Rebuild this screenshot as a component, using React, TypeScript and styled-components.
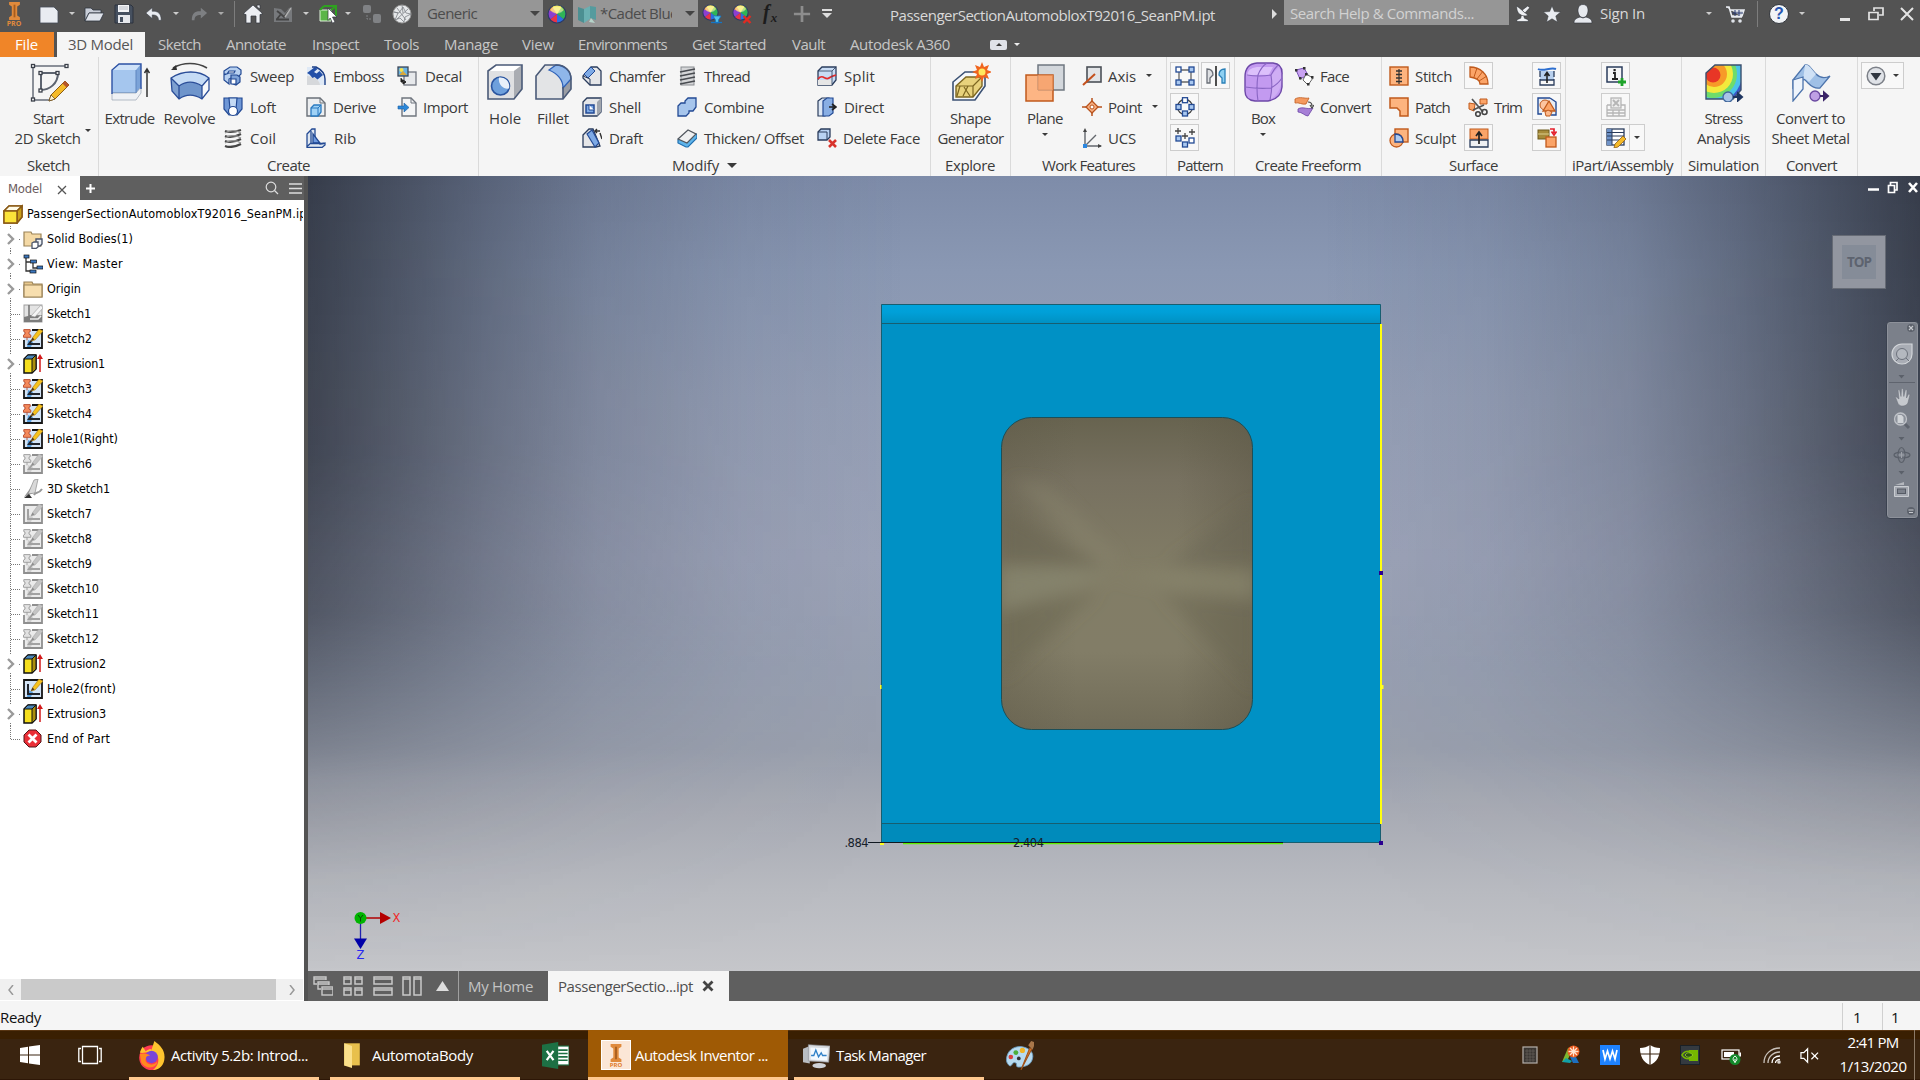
import React, { useLayoutEffect, useRef, useState } from "react";
import styled, { createGlobalStyle, css } from "styled-components";

const UI = `"Open Sans", "Noto Sans", "Liberation Sans", sans-serif`;
const TREE = `"DejaVu Sans Condensed", "DejaVu Sans", sans-serif`;

const Global = createGlobalStyle`
  * { box-sizing: border-box; }
  html, body { margin: 0; padding: 0; background: #535353; overflow: hidden; }
  body { font-family: ${UI}; font-size: 15px; color: #3b3b3b; }
  svg { display: block; flex: none; }
`;

/* ---------- text with a fixed advance width ---------- */

const FitBox = styled.span<{ $w: number }>`
  display: block;
  flex: none;
  width: ${(p) => p.$w}px;
  white-space: nowrap;
`;

function Fit({ w, children }: { w: number; children: string }) {
  const ref = useRef<HTMLSpanElement>(null);
  const [ls, setLs] = useState(0);
  useLayoutEffect(() => {
    if (ref.current) {
      const natural = ref.current.getBoundingClientRect().width;
      setLs((w - natural) / children.length);
    }
  }, [w, children]);
  return (
    <FitBox $w={w}>
      <span ref={ref} style={{ letterSpacing: `${ls}px` }}>{children}</span>
    </FitBox>
  );
}

/* ---------- icons ---------- */

const B = "#234a94";
const N = "#2a3c5c";
const O = "#c05a1c";

const Wheel = () => (
  <g>
    <path d="M10 10V1A9 9 0 0 1 18 6Z" fill="#8bd24a" /><path d="M10 10 18 6A9 9 0 0 1 17 15.5Z" fill="#2fb457" />
    <path d="M10 10 17 15.5A9 9 0 0 1 10 19Z" fill="#2c6fe0" /><path d="M10 10V19A9 9 0 0 1 3 15.5Z" fill="#e8334a" />
    <path d="M10 10 3 15.5A9 9 0 0 1 2 6Z" fill="#8c3fd0" /><path d="M10 10 2 6A9 9 0 0 1 10 1Z" fill="#f4a94a" />
    <path d="M10 10 5 2.500A9 9 0 0 1 15 2.500Z" fill="#f6ea5a" />
    <circle cx="10" cy="10" r="9" fill="none" stroke="#2c3a66" strokeWidth="1.2" />
    <ellipse cx="10" cy="6" rx="6" ry="3.6" fill="#fff" opacity=".35" />
  </g>
);
const SketchTile = ({ pin, gray }: { pin?: boolean; gray?: boolean }) => (
  <g>
    <rect x="1" y="1" width="18" height="18" fill={gray ? "#ebebeb" : "#d4e4f6"} />
    <path d={pin ? "M9 1h10v18H1v-8" : "M1 1h18v18H1z"} fill="none" stroke={gray ? "#8f8f8f" : "#161616"} strokeWidth="1.8" />
    <path d="M4 18h4l2-5-5-2z" fill={gray ? "#cfcfcf" : "#5aa0e0"} />
    <path d={pin ? "M9 11l-3 4h11" : "M5 5v10h12"} fill="none" stroke={gray ? "#a2a2a2" : "#20242c"} strokeWidth="2" />
    <path d="M8 12l2-4L16 0l4 2-8 9z" fill={gray ? "#c4c4c4" : "#f7c21c"} stroke={gray ? "#a8a8a8" : "#a5761a"} strokeWidth=".6" />
    <path d="M8 12l1.500-3.500 2 2z" fill={gray ? "#8c8c8c" : "#4c341c"} />
    {pin && (
      <g fill={gray ? "#e2e2e2" : "#f48a5c"} stroke={gray ? "#9a9a9a" : "#b8482a"} strokeWidth=".9">
        <path d="M.8.600h6.400v2l-1.200.5v2l1.800 1v2.200H.5V6.100l1.500-1v-2L.8 2.600z" /><path d="M4 8.300v3" />
      </g>
    )}
  </g>
);
const Plate = ({ x, y, s = 5, f = "#a9c8f0" }: { x: number; y: number; s?: number; f?: string }) => (
  <rect x={x} y={y} width={s} height={s} fill={f} stroke={B} strokeWidth="1.3" />
);

const ICONS: Record<string, React.ReactNode> = {
  /* quick access */
  newdoc: <path d="M1 3h14l4 4v12H1z" fill="#e9ecf1" stroke="#444c58" strokeWidth=".8" />,
  open: <g><path d="M1 4h6l2 2h8v3H5l-4 8z" fill="#c9ced8" stroke="#2f3540" strokeWidth=".8" /><path d="M5 9h15l-4 8H1z" fill="#dfe3ea" stroke="#2f3540" strokeWidth=".8" /></g>,
  save: <g><path d="M1 1h16l2 2v16H1z" fill="#46505f" stroke="#2c333e" /><rect x="4" y="1" width="11" height="7" fill="#f3f4f6" /><rect x="4" y="11" width="12" height="8" fill="#e6e8ec" /><rect x="6" y="13" width="3" height="5" fill="#46505f" /><path d="M5 3h9M5 5h9" stroke="#b9bec7" /></g>,
  undo: <path d="M1 9l7-6v4c6-.5 10 2 10 10h-3c0-4-2-6-7-6v4z" fill="#e9ecf1" stroke="#3a4048" strokeWidth=".6" />,
  redo: <path d="M19 9l-7-6v4C6 6.500 2 9 2 17h3c0-4 2-6 7-6v4z" fill="#7d7f82" />,
  home: <path d="M10 1l9 8v1.500h-2V19h-4v-7H8v7H3v-8.500H1V9zM14 1h3v4l-3-2z" fill="#eceef2" stroke="#30353d" strokeWidth=".7" />,
  sketchdim: <g><path d="M1 4l7 1 4 4 4-5 3-1v15H1z" fill="#77797c" /><path d="M4 15l4-5 3 3 7-9M4 7l4 3M3 15.500h13" stroke="#444" strokeWidth="1.800" fill="none" /><path d="M12 13l6-9" stroke="#b0b0b0" strokeWidth="1.500" /></g>,
  select: <g><path d="M1 6h11v11H1z" fill="#5cb548" stroke="#dff2da" /><path d="M5 2h12v10M1 6l4-4M12 6l5-4" stroke="#2fa020" strokeWidth="2" fill="none" /><path d="M9 4l9 9h-4.500l2.500 5-2.500 1.200-2.300-5.200L9 16.500z" fill="#fff" stroke="#30353d" strokeWidth=".7" /></g>,
  links: <g fill="#808285"><rect x="1" y="1" width="8" height="8" rx="2" /><rect x="11" y="10" width="8" height="9" rx="2" /><path d="M5 11v4h4" stroke="#808285" fill="none" strokeDasharray="2 1" /></g>,
  mesh: <g><circle cx="10" cy="10" r="9" fill="#e6e8ea" stroke="#999" /><path d="M2 8l5 1 4-6 3 6 5 1-6 3-1 5-4-4-5 2 3-7zM10 1l1 8M5 4l9 12M16 5L5 15" stroke="#7d8186" strokeWidth=".8" fill="none" /></g>,
  wheel: <Wheel />,
  swatch: <g><path d="M1 3l6 2v14l-6-3z" fill="#4c8f92" /><path d="M7 5l6-3v13l-6 4z" fill="#6bb0b2" /><path d="M13 2l6 1v13l-6-2z" fill="#559b9e" /><path d="M14 14l4 5-6-1z" fill="#cfe" opacity=".6" /></g>,
  wheelfilter: <g><g transform="scale(.85)"><Wheel /></g><path d="M11 12h8l-2.500 4v3h-3v-3z" fill="#53c3ea" stroke="#1675c4" strokeWidth=".8" /><path d="M9 18.500h11" stroke="#1675c4" strokeWidth="1.300" /></g>,
  wheelx: <g><g transform="scale(.85)"><Wheel /></g><path d="M11.500 12l7 7m0-7l-7 7" stroke="#e22a22" strokeWidth="2.400" /></g>,
  plus: <path d="M10 1v18M1 10h18" stroke="#8d8d8d" strokeWidth="3" />,
  satellite: <g fill="#eef0f3" stroke="#2c3036" strokeWidth=".6"><path d="M3 18.500h12v-2l-4-1.500-1-4H8l-1 4-4 1.500z" /><path d="M3 2c-1 8 5 12 12 10z" /><path d="M8.500 6.500l6-4.500 2 2-5 5.500z" /></g>,
  star: <path d="M10 1l2.600 6.300 6.900.5-5.300 4.400L16 19l-6-3.700L4 19l1.800-6.800L.5 7.800l6.900-.5z" fill="#e9ecf1" stroke="#33373d" strokeWidth=".5" />,
  person: <g fill="#e6e9ee" stroke="#2f333a" strokeWidth=".6"><path d="M1 19c0-4 3-5 6-6l3 1 3-1c3 1 6 2 6 6z" /><path d="M10 .5c3.500 0 5 2.500 5 6S13 13.500 10 13.500 5 10 5 6.500s1.500-6 5-6z" /></g>,
  cart: <g><path d="M1 3h3l3 10h10M5 6h14l-2 6H7" fill="#cbd0d8" stroke="#e9ecf1" strokeWidth="1.600" /><circle cx="8" cy="17" r="1.800" fill="#dfe3e9" /><circle cx="15" cy="17" r="1.800" fill="#dfe3e9" /><path d="M7 9h11M10 6v6m4-6v6" stroke="#2b3a70" /></g>,

  /* ribbon, large */
  start2d: <g fill="none"><path d="M4 4h34M4 4v34h18" stroke="#8a8f98" strokeWidth="2" /><path d="M12 11h17M12 11v17c8 0 17-6 17-17" stroke="#5d6470" strokeWidth="2" /><g fill="#fff" stroke="#3a3f49" strokeWidth="1.300"><rect x="2.500" y="2.500" width="3" height="3" /><rect x="36" y="2.500" width="3" height="3" /><rect x="2.500" y="36" width="3" height="3" /><rect x="10" y="9.500" width="3" height="3" /><rect x="27" y="9.500" width="3" height="3" /><rect x="10" y="27" width="3" height="3" /></g><path d="M22 33L36 19l4 4-14 14-6 2z" fill="#f5ba28" stroke="#8c5d16" /><path d="M36 19l-2.500 2.500 4 4L40 23z" fill="#b8562a" /><path d="M20 39l2-6 4 4z" fill="#fff1cf" stroke="#5d4318" strokeWidth=".7" /></g>,
  extrude: <g><path d="M2 8l7-6h22v27l-5 8H2z" fill="#7ba3d8" /><path d="M2 8h24v22H2z" fill="#a5c6ee" /><path d="M2 8l7-6h22l-5 6z" fill="#cfe2f8" /><path d="M2 31h24l5-6v6l-5 7H2z" fill="#eef1f5" stroke="#9aa4b2" strokeWidth=".7" /><path d="M26 8v23" stroke="#5f86bf" /><path d="M2 32V8l7-6h22v25" fill="none" stroke="#2d52a4" strokeWidth="1.400" /><path d="M37 35V8M34.500 11L37 7l2.500 4" fill="none" stroke="#333" strokeWidth="1.500" /></g>,
  revolve: <g><path d="M3 6C13 0 27 0 37 6" fill="none" stroke="#444" strokeWidth="1.600" /><path d="M1 8l5-5 1 5z" fill="#333" /><path d="M1 16c12-8 28-8 38 0l-7 8c-8-5-16-5-23 0z" fill="#c5dbf5" /><path d="M1 16l8 8v13l-7-8z" fill="#7ea0d0" /><path d="M9 24c7-5 15-5 23 0v13c-8-5-16-5-23 0z" fill="#6f95cb" /><path d="M32 24l7-8v12l-7 9z" fill="#f6f8fb" /><path d="M1 16c12-8 28-8 38 0v12l-7 9c-8-5-16-5-23 0l-7-8zM9 24c7-5 15-5 23 0v13M9 24v13M1 16l8 8M32 24l7-8" fill="none" stroke="#2a4d98" strokeWidth="1.300" /></g>,
  hole: <g><path d="M3 9l8-6h26v24l-8 10H3z" fill="#dfe0e2" /><path d="M3 9l8-6h26l-8 6z" fill="#fff" /><path d="M29 9l8-6v24l-8 10z" fill="#a9acb2" /><path d="M3 37V9l8-6h26v24l-8 10z" fill="none" stroke="#4a5a78" strokeWidth="1.600" /><circle cx="15.500" cy="24" r="9" fill="#6ea0dc" stroke="#2a55a0" strokeWidth="1.600" /><path d="M14 15.500a9 9 0 0 1 10 11c-6 1-11-4-10-11z" fill="#e8f0fa" /></g>,
  fillet: <g><path d="M3 14L12 3h12c8 0 14 6 14 14v10l-8 10H3z" fill="#e3e4e6" /><path d="M30 25l8-8v10l-8 10z" fill="#9a9da4" /><path d="M16 8l7-5c8 0 15 6 15 14l-8 9c0-8-5-14-14-18z" fill="#8fb6ea" stroke="#2f62b8" strokeWidth="1.300" /><path d="M3 37V14L12 3h12c8 0 14 6 14 14v10l-8 10zM30 37V25" fill="none" stroke="#4a5a78" strokeWidth="1.600" /></g>,
  shape: <g><path d="M2 20l12-10h20v14L24 38H2z" fill="#f6f8fa" stroke="#3c5274" strokeWidth="1.600" /><path d="M5 24l10-9h16v9l-9 11H5z" fill="#e8d27c" stroke="#7c6620" strokeWidth="1.400" /><path d="M5 24h17v11M22 24l9-9M9 24l-3 10M13 25l6 9M17 24l-5 10" stroke="#7c6620" strokeWidth="1.200" fill="none" /><path d="M31 0l2 5 5-2-2 5 5 2-5 2 2 5-5-2-2 5-2-5-5 2 2-5-5-2 5-2-2-5 5 2z" fill="#f0651e" /><circle cx="31" cy="10" r="3.500" fill="#ffe95e" /></g>,
  plane: <g><rect x="13" y="3" width="26" height="25" fill="#d3d7dc" stroke="#6f7780" strokeWidth="1.500" /><rect x="1" y="13" width="27" height="26" fill="#fdb584" stroke={O} strokeWidth="1.500" /><path d="M13 13v15h15" fill="none" stroke="#b98567" /><path d="M13 13h15v15H13z" fill="#f39c66" opacity=".6" /></g>,
  box: <g><path d="M2 15Q2 2 14 1h16q10 1 9 12v12q-1 12-14 14H12Q2 38 2 29z" fill="#c39af0" stroke="#6d48a8" strokeWidth="1.400" /><path d="M4 14q0-8 10-9h16q-4 7-4 8-12-1-22 1z" fill="#dcc0fb" /><path d="M28 13q5-5 8-8 3 5 2 18-3 10-10 14z" fill="#cfaef4" /><path d="M2 25q14 2 26 1 7-4 11-10M15 39q-2-13 0-26 3-8 9-12M27 38q3-13 1-25 3-6 7-10M4 13q12 2 24 0" fill="none" stroke="#8a66c4" strokeWidth="1.100" /></g>,
  stress: <g><clipPath id="st"><path d="M2 11l9-8h26v25l-8 9H2z" /></clipPath><g clipPath="url(#st)"><rect width="40" height="40" fill="#3a57c8" /><circle cx="9" cy="12" r="29" fill="#4bc3ea" /><circle cx="9" cy="12" r="24" fill="#6edc6b" /><circle cx="10" cy="12" r="19" fill="#f3ea3c" /><circle cx="10" cy="12" r="13" fill="#f79a28" /><circle cx="9" cy="13" r="7.500" fill="#e83626" /></g><path d="M2 11l9-8h26v25l-8 9H2z" fill="none" stroke="#3b4f6e" strokeWidth="1.400" /><circle cx="24" cy="35" r="5" fill="#a9c4e6" stroke="#41679c" strokeWidth="1.300" /><path d="M29 35h8m-3-3.500l4 3.500-4 3.500z" stroke="#1e3560" strokeWidth="2" fill="#1e3560" /></g>,
  sheet: <g><path d="M2 18L14 3c4-1 6 4 11 9s10 4 14 2l-10 12c-5 1-8-1-12-5s-4-5-5-3l-10 8z" fill="#9fc0e6" stroke="#4d74ac" strokeWidth="1.300" /><path d="M14 3c4-1 6 4 11 9l-7 8c-4-4-5-4-6-2z" fill="#cfe1f5" /><path d="M2 18l10-3v12L2 39z" fill="#eef4fb" stroke="#4d74ac" strokeWidth="1.300" /><circle cx="24" cy="34" r="5" fill="#bfa0e4" stroke="#6a48a0" strokeWidth="1.300" /><path d="M29 34h7m-3-3.500l4 3.500-4 3.500z" stroke="#3a2468" strokeWidth="2" fill="#3a2468" /></g>,

  /* ribbon, small */
  sweep: <g fill="#b7d0f0" stroke={B} strokeWidth="1.200"><path d="M1 5l6-4h7l4 3v4l-4 4H8l-2 1v5l-5-4V9l5-2h5l1-2H6L4 8H1z" /><path d="M8 9h6l3 2v5l-4 3-5-2z" fill="#7ea3d8" /><path d="M8 13h5v5H8z" fill="#fff" /></g>,
  loft: <g stroke={B} strokeWidth="1.200"><path d="M1 1h18v11l-5 6H6l-5-6z" fill="#6f97d6" /><path d="M6 1h8l-1 11H7z" fill="#c4daf5" /><circle cx="10" cy="14" r="4.500" fill="#fff" /></g>,
  coil: <g fill="none" stroke="#454545" strokeWidth="2.200"><path d="M2 3c5 2 10 1 16-1M2 8c5 2 10 1 16-2M2 13c5 2 10 1 16-2M2 18c5 2 10 1 16-2" /><path d="M2 5c5-3 11-3 16 0M2 10c5-3 11-3 16 0M2 15c5-3 11-3 16 0" stroke="#9a9a9a" strokeWidth="1.200" /></g>,
  emboss: <g><path d="M1 1h8c6 2 10 6 10 12v6h-5c0-4-5-9-13-9z" fill="#dfe9f6" /><path d="M1 10c8 0 13 5 13 9H1z" fill="#d6d8db" /><path d="M1 7l8-6 2.500 2-3.500 3 2.500 1.500 3-2.500 3.500 4-5.500 4.500-3-2.500-2 1-3-3.500z" fill="#2450a8" /><path d="M6 1h4c6 3 9 7 9 12v6" fill="none" stroke="#1c3f88" strokeWidth="1.400" /></g>,
  derive: <g><path d="M1 1h13l5 5v13H1z" fill="#eceef0" stroke="#6a7078" strokeWidth="1.400" /><path d="M14 1v5h5" fill="none" stroke="#6a7078" /><path d="M5 11l3-3h7v7l-3 4H5z" fill="#9fd2f6" stroke="#2879c0" strokeWidth="1.300" /><path d="M5 11h7v8M12 11l3-3" fill="none" stroke="#2879c0" /></g>,
  rib: <g stroke={B} strokeWidth="1.300"><path d="M1 6l5-5h3v9l5 6 5-1v2l-3 2.500H1z" fill="#dfe7f1" /><path d="M7 6l7 9H7z" fill="#6f9be0" /><path d="M5 3v12l-4 3.500M5 15.500h13" fill="none" /></g>,
  decal: <g><rect x="7" y="6" width="12" height="13" fill="#e7e9ec" stroke="#707680" strokeWidth="1.300" /><rect x="1" y="1" width="10" height="9" fill="#6ab4e6" stroke="#3b4656" strokeWidth="1.300" /><circle cx="4.500" cy="4" r="2" fill="#f6e24a" /><path d="M2 9l4-4 4 4z" fill="#d9a83a" /><path d="M4 12v4h4m-2-2l3 2-3 2z" fill="#222" stroke="#222" /></g>,
  import: <g><path d="M5 1h9l5 5v13H5z" fill="#f4f5f6" stroke="#6f757e" strokeWidth="1.400" /><path d="M14 1v5h5" fill="none" stroke="#6f757e" /><path d="M1 9h6V6l5 4.500L7 15v-3H1z" fill="#2b87d8" stroke="#1a5fa5" strokeWidth=".6" /></g>,
  chamfer: <g><path d="M1 10L9 1h6l4 4v14H8l-7-7z" fill="#e5e6e8" stroke={N} strokeWidth="1.300" /><path d="M2 8l7-7 4 4-7 7z" fill="#7eaae6" stroke={B} /><path d="M1 10l7 3v6" fill="none" stroke={N} /></g>,
  shell: <g><path d="M1 5l4-4h14v14l-4 4H1z" fill="#e5e6e8" stroke={N} strokeWidth="1.300" /><path d="M15 5l4-4v14l-4 4z" fill="#a0a5ad" /><rect x="4" y="8" width="8" height="8" fill="#7eaae6" stroke={B} strokeWidth="1.500" /><path d="M7 8v5h5" stroke={B} fill="#fff" /></g>,
  draft: <g><path d="M1 7l6-6h4l7 17-4 1H1z" fill="#e5e6e8" stroke={N} strokeWidth="1.300" /><path d="M5 6l5-4 7 13-4 4z" fill="#7eaae6" stroke={B} strokeWidth="1.200" /><path d="M13 3l5 0M15 1l-2 2 2 2M18 5l2 6" stroke="#333" strokeWidth="1.400" fill="none" /></g>,
  thread: <g><rect x="4" y="1" width="13" height="18" fill="#d5d6d8" stroke="#8a8d92" /><path d="M3 6l15-3M3 10l15-3M3 14l15-3M3 18l15-3" stroke="#484b50" strokeWidth="1.500" /></g>,
  combine: <path d="M1 9l3-3h4V4l3-3h8v9l-3 4h-4v2l-3 3H1z" fill="#a6c5ec" stroke={B} strokeWidth="1.300" />,
  thicken: <g strokeWidth="1.200"><path d="M1 12L12 7l8-1v4l-9 9H9l-8-4z" fill="#5fb4ea" stroke="#1f6fb0" /><path d="M1 11L11 2l8 4-9 9z" fill="#eff0f1" stroke="#50565e" /></g>,
  split: <g><path d="M1 5l4-4h14v13l-4 5H1z" fill="#c9dcf4" stroke={N} strokeWidth="1.300" /><path d="M1 14h14v5H1z" fill="#e6e6e6" /><path d="M1 13c5-6 7 2 11-1s5-2 7-3" fill="none" stroke="#e22c2c" strokeWidth="1.800" /><path d="M1 5h14v14M15 5l4-4" fill="none" stroke={N} strokeWidth=".8" /></g>,
  direct: <g><path d="M1 4l4-3h7v15l-4 3H1z" fill="#dbe6f4" stroke={N} strokeWidth="1.200" /><path d="M6 4l4-3h6v15l-4 3H6z" fill="#88aee4" stroke={B} strokeWidth="1.200" /><path d="M12 10h6m-3-3l4 3-4 3" stroke="#222" strokeWidth="1.600" fill="none" /></g>,
  delface: <g><path d="M1 4l3-3h9v8l-3 3H1z" fill="#b9d2f2" stroke={N} strokeWidth="1.300" /><path d="M1 4h9v8" fill="none" stroke={N} /><path d="M12 12l7 7m0-7l-7 7" stroke="#d8332c" strokeWidth="2.600" /></g>,
  axis: <g><rect x="5" y="1" width="14" height="15" fill="#e2e4e7" stroke="#4b5058" strokeWidth="1.600" /><path d="M1 19L13 8" stroke="#c4501c" strokeWidth="2" /></g>,
  point: <g stroke="#b8521c" fill="#f9b184"><path d="M10 1v18M0 10h20" strokeWidth="1.500" /><path d="M10 4l6 6-6 6-6-6z" strokeWidth="1.300" /><circle cx="10" cy="10" r="2" fill="#fff" /></g>,
  ucs: <g><path d="M3 2v16h16M3 18L14 7" fill="none" stroke="#63676d" strokeWidth="1.400" /><path d="M1 4l2-4 2 4zM16 16l4 2-4 2z" fill="#444" /><rect x="1" y="16" width="4" height="4" fill="#2b87e0" /></g>,
  patrect: <g><path d="M4 4h12v12H4z" fill="none" stroke="#666" strokeWidth="1.300" /><Plate x={1} y={1} f="#fff" /><Plate x={14} y={1} /><Plate x={1} y={14} /><Plate x={14} y={14} /></g>,
  mirror: <g><path d="M10 0v20" stroke="#222" strokeWidth="1.600" /><path d="M1 3c4 0 6 2 6 6l-3 3v5H1z" fill="#dfe1e4" stroke="#6a6f77" strokeWidth="1.300" /><path d="M19 3c-4 0-6 2-6 6l3 3v5h3z" fill="#8ed0f2" stroke="#2a80b8" strokeWidth="1.300" /></g>,
  patcirc: <g><circle cx="10" cy="10" r="7.500" fill="none" stroke="#444" strokeWidth="1.300" /><Plate x={7.500} y={.7} f="#fff" /><Plate x={14} y={7.500} /><Plate x={7.500} y={14} /><Plate x={1} y={7.500} /></g>,
  patsketch: <g><path d="M3 0v6M0 3h6M10 5v6M7 8h6M17 1v6M14 4h6" stroke="#444" strokeWidth="1.300" /><Plate x={1} y={8} /><Plate x={7.500} y={14} /><Plate x={14} y={10} f="#fff" /></g>,
  face: <g><path d="M2 4l8-2 4 7-8 4z" fill="#c9a2f2" stroke="#7a52b8" /><path d="M12 8l7 4-5 7-5-5z" fill="#fff" stroke="#666" /><g fill="#333"><rect x="1" y="3" width="2.500" height="2.500" /><rect x="9" y="1" width="2.500" height="2.500" /><rect x="17" y="10" width="2.500" height="2.500" /><rect x="13" y="17" width="2.500" height="2.500" /><rect x="5" y="11" width="2.500" height="2.500" /><rect x="11" y="7" width="2.500" height="2.500" /></g></g>,
  convert: <g><path d="M1 2c5-3 10 0 14-1l-3 6c-4 1-7-2-11-1z" fill="#f49a60" stroke={O} strokeWidth=".8" /><path d="M4 12c5-3 9 1 15-1l-5 8c-3 0-6-4-10-4z" fill="#a67fd6" stroke="#6b45a4" strokeWidth=".8" /><path d="M14 5c3 0 4 2 4 4m-2-1l2 3 2-3" fill="none" stroke="#444" strokeWidth="1.200" /></g>,
  stitch: <g><rect x="1" y="1" width="18" height="18" fill="#fdb47f" stroke={O} strokeWidth="1.400" /><path d="M10 3v15" stroke="#333" strokeWidth="1.200" /><path d="M7 5h6M7 8.500h6M7 12h6M7 15.500h6" stroke="#333" strokeWidth="1.300" /></g>,
  patch: <path d="M1 1h18v18h-8v-5l-3-3H1z" fill="#fdb47f" stroke={O} strokeWidth="1.500" />,
  sculpt: <g><rect x="6" y="1" width="13" height="13" fill="#fdb47f" stroke={O} strokeWidth="1.400" /><circle cx="7.500" cy="12.500" r="6.500" fill="#fdb47f" stroke={O} strokeWidth="1.300" /><path d="M6 6c5 0 8 3 8 8H6z" fill="#aecbf0" stroke={B} strokeWidth="1.300" /></g>,
  ruled: <g><path d="M1 1c10 0 18 7 18 17h-8c0-3-3-6-10-7z" fill="#fba468" stroke={O} strokeWidth="1.300" /><path d="M5 11l3-9M8 13l6-8M10 15l8-5" stroke={O} strokeWidth="1" /></g>,
  trim: <g><path d="M12 2h7v5h-7zM1 6l6 1-1 7-5-2z" fill="#fba468" stroke={O} /><path d="M4 2l11 13M16 8L5 13" stroke="#555" strokeWidth="1.700" /><circle cx="16.500" cy="15" r="2.500" fill="none" stroke="#444" strokeWidth="1.600" /><circle cx="10" cy="17" r="2.300" fill="none" stroke="#444" strokeWidth="1.600" /></g>,
  thickenS: <g><rect x="1" y="1" width="18" height="10" fill="#fba468" stroke={O} /><path d="M1 12h18v7H1z" fill="#eef0f3" stroke={N} strokeWidth="1.300" /><path d="M10 16V5M7 8l3-4 3 4" fill="none" stroke="#222" strokeWidth="1.700" /></g>,
  replace: <g><path d="M1 3c5 3 12-2 18 0" stroke="#2e6fd0" strokeWidth="2" fill="none" /><path d="M3 5h14v9H3z" fill="#b8d0ee" /><path d="M3 13v6h14v-6M3 11V5M17 11V5M3 14h14" stroke={N} strokeWidth="1.300" fill="none" /><path d="M10 17V8M7.500 10L10 6.500l2.500 3.500" stroke="#222" strokeWidth="1.600" fill="none" /></g>,
  repair: <g><path d="M13 1l6 4v13h-5M13 1H1v16h4" fill="#e8ecf2" stroke={B} strokeWidth="1.400" /><circle cx="8" cy="8" r="5" fill="#fcc4a0" stroke={O} /><path d="M12 4l6 10H6z" fill="#fba468" stroke={O} strokeWidth="1.300" /><path d="M8 15l3-2 4 2-2 4H9z" fill="#fcb98c" stroke={O} /></g>,
  extend: <g><rect x="1" y="2" width="11" height="9" fill="#a68b3a" stroke="#6d5a1c" /><path d="M1 6h11" stroke="#dccf8e" /><rect x="9" y="9" width="10" height="10" fill="#fba468" stroke={O} strokeWidth="1.300" /><path d="M13 1h4v4m-2.500-1.500L17 7l2.500-3.500" fill="none" stroke="#e5202c" strokeWidth="1.700" /></g>,
  ipart: <g><rect x="1" y="1" width="15" height="15" fill="#f5f6f7" stroke={N} strokeWidth="1.500" /><path d="M7 7h2v6m-3 0h6" stroke="#222" strokeWidth="1.800" fill="none" /><rect x="7.500" y="3" width="2.200" height="2.200" fill="#222" /><path d="M16 12v8M12 16h8" stroke="#1ea32a" strokeWidth="2.800" /></g>,
  itable: <g stroke="#b5b5b5" fill="none" strokeWidth="1.300"><rect x="5" y="1" width="10" height="10" fill="#ededed" /><path d="M7 3l6 6m0-6l-6 6" strokeWidth="1.800" /><path d="M1 8h4M1 8v11h18V8h-4M1 13h18M1 16h18M7 13v6m6-6v6" /></g>,
  iedit: <g><rect x="1" y="1" width="17" height="16" fill="#fff" stroke={N} strokeWidth="1.300" /><rect x="1" y="1" width="5" height="16" fill="#6f93c8" /><path d="M1 4.500h17M1 8h17M1 12h17M6 1v16" stroke={N} strokeWidth="1" /><path d="M9 16l8-8 3 3-8 8-4 1z" fill="#f5ba28" stroke="#8c5d16" strokeWidth=".8" /></g>,
  down: <g><circle cx="10" cy="10" r="8.800" fill="#dfe2e7" stroke="#7c8088" strokeWidth="1.500" /><path d="M4.500 7h11L10 14.500z" fill="#2f3640" /></g>,

  /* model tree */
  part: <g stroke="#8a5a16" strokeWidth="1.500"><path d="M1 7l5-5h13v11l-5 6H1z" fill="#f1cf1c" /><path d="M1 7l5-5h13l-5 5z" fill="#fffbe6" /><path d="M14 7l5-5v11l-5 6z" fill="#c9a01a" /><path d="M1 7h13v12H1z" fill="#fbe33a" /></g>,
  bodies: <g><path d="M1 3h7l1 2h9v12H1z" fill="#f4d9a5" stroke="#9b8358" strokeWidth="1.200" /><path d="M13 10h6v5l-2 2h-4z" fill="#eef1f5" stroke="#4c566a" strokeWidth="1.400" /><path d="M9 14l2-1h4v5l-2 1.500H9z" fill="#fff" stroke="#4c566a" strokeWidth="1.300" /></g>,
  view: <g><path d="M3 4v13h5M3 8h4M10 8v6h5" fill="none" stroke="#333" strokeWidth="1.300" /><g fill="#3c78c0" stroke="#111" strokeWidth=".7"><rect x="1" y="1" width="5" height="3" /><rect x="7.500" y="6" width="6" height="3" /><rect x="14" y="12" width="6" height="3" /><rect x="7" y="16" width="6" height="3" /></g></g>,
  folder: <g><path d="M1 3h8l1 2h9v13H1z" fill="#e9c98d" stroke="#9b8358" strokeWidth="1.200" /><path d="M1 6h18v12H1z" fill="#f7deae" stroke="#9b8358" strokeWidth="1.200" /></g>,
  sketchGrayOpen: <g><rect x="1" y="1" width="18" height="17" fill="#e3e3e3" stroke="#a0a0a0" /><path d="M6 1v11h13" fill="none" stroke="#777" strokeWidth="1.600" /><path d="M1 13l8-2 10 2v5H1z" fill="#7c7c7c" /><path d="M8 12L18 1l2 3-8 9z" fill="#f5f5f5" stroke="#999" strokeWidth=".6" /><path d="M7 15h8l3-3" stroke="#eee" strokeWidth="1.500" fill="none" /></g>,
  sketchPin: <SketchTile pin />,
  sketchPinGray: <SketchTile pin gray />,
  sketch: <SketchTile />,
  sketchGray: <SketchTile gray />,
  sketch3d: <g><path d="M1 18L11 4l-1 10z" fill="#9a9a9a" /><path d="M5 15L11 1l4-1-3 14z" fill="#d9d9d9" stroke="#8d8d8d" strokeWidth=".7" /><path d="M1 19h8l-3-4z" fill="#333" /><path d="M11 16c2-4 4 0 8-6" stroke="#999" strokeWidth="2" fill="none" /></g>,
  extrusion: <g><path d="M1 5l4-4h8v14l-4 4H1z" fill="#f6df1e" stroke="#111" strokeWidth="1.500" /><path d="M9 5l4-4v14l-4 4z" fill="#a98e0e" stroke="#111" /><path d="M1 5l4-4h8L9 5z" fill="#4a86b8" stroke="#111" /><path d="M17 18V4" stroke="#d21a1a" strokeWidth="1.500" /><path d="M14 5l3-5 3 5z" fill="#d21a1a" /></g>,
  end: <g><path d="M6 1h7l5 5v7l-5 5H6l-5-5V6z" fill="#ea2f37" stroke="#53171a" strokeWidth="1" /><path d="M5.500 5.500l8 8m0-8l-8 8" stroke="#fff" strokeWidth="2.800" /></g>,

  /* window arrangement */
  cascade: <g fill="#5f5f5f" stroke="#c9c9c9" strokeWidth="1.400"><path d="M4 8H1V1h12v3M1 3h12" fill="none" /><path d="M8 13H5V6h11v3M5 8h11" fill="none" /><rect x="9" y="11" width="11" height="8" /><path d="M9 13h11" /></g>,
  tiles: <g fill="none" stroke="#c9c9c9" strokeWidth="1.500"><path d="M1 1h7v7H1zM12 1h7v7h-7zM1 12h7v7H1zM12 12h7v7h-7zM1 3h7M12 3h7M1 14h7M12 14h7" /></g>,
  rows: <g fill="none" stroke="#c9c9c9" strokeWidth="1.500"><path d="M1 1h18v7H1zM1 12h18v7H1zM1 3h18M1 14h18" /></g>,
  cols: <g fill="none" stroke="#c9c9c9" strokeWidth="1.500"><path d="M1 1h7v18H1zM12 1h7v18h-7zM1 3h7M12 3h7" /></g>,

  /* taskbar */
  windows: <path d="M0 3l8-1.200V9.500H0zM9 1.600L20 0v9.500H9zM0 10.500h8v7.700L0 17zM9 10.500h11V20L9 18.400z" fill="#fff" />,
  firefox: <g><circle cx="10" cy="11.500" r="8.500" fill="#ff3b52" /><path d="M2 8c1-3 2-4 2-4l2 3c2-1 3-2 4-1l2-6c4 3 7 6 7 11 0 6-4 9-8 9 4-3 5-8 2-11-4-3-8 0-11-1z" fill="#ffc42e" /><circle cx="10" cy="11" r="4.300" fill="#7a45d8" /><path d="M2 9c3-1 6 0 7 1-3 0-3 2-3 4 2 3 6 3 8 0 0 5-8 6-11 1z" fill="#ff8a1e" /></g>,
  explorer: <g><path d="M4 1h12v17H4z" fill="#e8c04c" /><path d="M4 1l6 2v17l-6-2z" fill="#fbe08a" /></g>,
  excel: <g><rect x="9" y="3" width="11" height="14" fill="#fff" stroke="#1d7044" strokeWidth=".8" /><path d="M12 6h7M12 8.500h7M12 11h7M12 13.500h7" stroke="#1d7044" strokeWidth="1.200" /><path d="M0 2l12-2v20L0 18z" fill="#1d7044" /><path d="M3.500 6.500l5 7m0-7l-5 7" stroke="#fff" strokeWidth="1.600" /></g>,
  taskmgr: <g><path d="M0 5l5-2v13l-5-1z" fill="#b9bdc2" /><path d="M4 2l16 1-1 12-15-1z" fill="#d9dce0" stroke="#8d9196" strokeWidth=".5" /><path d="M5.500 4l13 .7-.8 9-12-.7z" fill="#f3f9ff" /><path d="M6 10l2 0 1.500-4 2 5 2-3 1 2h3" fill="none" stroke="#2f80c8" strokeWidth="1" /><ellipse cx="12" cy="17.500" rx="5" ry="2" fill="#d0d3d8" /></g>,
  paint: <g><path d="M1 13c0-6 5-10 11-9 5 1 8 4 7 8-1 5-6 6-10 6-2 0 0-3-2-3-2-1-2 3-4 2-1-1-2-2-2-4z" fill="#b6daf0" stroke="#6a9cc0" strokeWidth=".6" /><circle cx="4" cy="11" r="1.600" fill="#d8403c" /><circle cx="7.500" cy="8" r="1.700" fill="#4caf3a" /><circle cx="12" cy="6.500" r="1.800" fill="#f0b428" /><circle cx="9.500" cy="12" r="1.300" fill="#333" /><path d="M11 20l6-15 1.500.5z" fill="#d8782a" stroke="#a0521a" strokeWidth=".7" /><path d="M16 3l2-3 3 1-2 5z" fill="#a9774a" /></g>,
  tgrid: <g><rect x="3" y="2" width="14" height="16" fill="#3a3632" stroke="#b5b0ab" strokeWidth="1.200" /><path d="M5 6h10M5 9h10M5 12h10M5 15h10M7 4v13M10 4v13M13 4v13" stroke="#6d665f" strokeWidth=".6" /></g>,
  tadsk: <g><path d="M1 17L7 3l5 1-6 12z" fill="#7db72f" /><path d="M9 12l5-2 4 8h-6z" fill="#1d6fc0" /><path d="M1 17l4-4 6 3-2 2z" fill="#12a0a8" /><circle cx="12.500" cy="6.500" r="6" fill="#ea5a1e" /><path d="M12.500 1.500v10M7.500 6.500h10M9 3l7 7m0-7l-7 7" stroke="#ffe3d0" strokeWidth="1.300" /></g>,
  tw: <g><rect width="20" height="20" fill="#1e82ff" /><path d="M3 5l2 9 2.500-8 2.500 8 2.500-8 2.500 8 2-9" fill="none" stroke="#fff" strokeWidth="1.700" /></g>,
  tshield: <g><path d="M10 0c3 2 6 3 10 3 0 8-3 14-10 17C3 17 0 11 0 3c4 0 7-1 10-3z" fill="#fff" /><path d="M10 0v20M0 9h20" stroke="#3a2410" strokeWidth="1.200" /></g>,
  tnv: <g><rect x=".5" y=".5" width="19" height="19" fill="#343a40" stroke="#1a2026" /><path d="M9 5h9v11H9z" fill="#76b900" /><path d="M2 10c3-5 9-5 13 0-4 5-10 5-13 0z" fill="none" stroke="#76b900" strokeWidth="1.500" /><path d="M5 10c2-3 5-3 8 0-3 3-6 3-8 0z" fill="#2c5410" stroke="#8fce20" /></g>,
  tbatt: <g><rect x="1" y="5" width="17" height="9" fill="none" stroke="#fff" strokeWidth="1.200" /><rect x="3" y="7" width="10" height="5" fill="#fff" /><path d="M18.500 7.500h1.500v4h-1.500z" fill="#fff" /><circle cx="14" cy="14.500" r="5.500" fill="#12892a" /><path d="M14 11c3 2 2 5 0 6-2-1-3-4 0-6zM14 14v4" fill="none" stroke="#fff" strokeWidth="1" /></g>,
  twifi: <g fill="none" stroke="#c9c2bb" strokeWidth="1.300"><path d="M2 18C2 9 9 3 18 3M6 18c0-6 5-11 12-11" /><path d="M10 18c0-4 3-7 8-7M13.500 18c0-2 2-3.500 4.500-3.500" stroke="#fff" /><circle cx="17" cy="17" r="1.200" fill="#fff" /></g>,
  tmute: <path d="M1 7h3l4-4v14l-4-4H1zM12 7l7 7m0-7l-7 7" fill="none" stroke="#fff" strokeWidth="1.300" />,
};

const BIG = new Set(["start2d", "extrude", "revolve", "hole", "fillet", "shape", "plane", "box", "stress", "sheet"]);

function Icon({ n, s = 20 }: { n: string; s?: number }) {
  const v = BIG.has(n) ? 40 : 20;
  return <svg width={s} height={s} viewBox={`0 0 ${v} ${v}`}>{ICONS[n]}</svg>;
}

const Arrow = styled.i<{ $c?: string; $s?: number }>`
  display: block;
  flex: none;
  width: 0;
  height: 0;
  border: solid transparent;
  border-width: ${(p) => p.$s ?? 3}px ${(p) => p.$s ?? 3}px 0;
  border-top-color: ${(p) => p.$c ?? "#3a3a3a"};
`;

/* ---------- frame ---------- */

const Screen = styled.div`
  width: 1920px;
  height: 1080px;
  display: flex;
  flex-direction: column;
  overflow: hidden;
  background: #535353;
`;

const TitleBar = styled.header`
  display: flex;
  height: 32px;
  align-items: flex-start;
  color: #d9d9d9;
`;
const Slot = styled.div<{ $w: number; $pt?: number }>`
  display: flex;
  flex: none;
  align-items: center;
  width: ${(p) => p.$w}px;
  height: 27px;
  padding-top: ${(p) => p.$pt ?? 0}px;
  line-height: 25px;
`;
const Vline = styled.span`
  width: 1px;
  height: 26px;
  background: #7d7d7d;
`;
const Combo = styled.div<{ $w: number; $mr: number }>`
  display: flex;
  flex: none;
  align-items: center;
  width: ${(p) => p.$w}px;
  margin-right: ${(p) => p.$mr}px;
  height: 27px;
  background: #969696;
  color: #4c4c4c;
  line-height: 25px;
`;
const Push = styled.span<{ $w: number }>`
  flex: none;
  width: ${(p) => p.$w}px;
`;
const Clip = styled.div<{ $w: number }>`
  flex: none;
  width: ${(p) => p.$w}px;
  overflow: hidden;
`;
const SearchBox = styled(Combo)`
  height: 25px;
  color: #d2d2d2;
  line-height: 22px;
`;
const Fx = styled.span`
  padding-bottom: 4px;
  font: italic 700 20px/20px "Liberation Serif", serif;
  color: #1c1c1c;
  sub { margin-left: 1px; font-size: 13px; line-height: 0; vertical-align: -3px; }
`;
const ProLogo = styled.div`
  display: flex;
  flex-direction: column;
  align-items: center;
  width: 16px;
  padding-top: 2px;
  font-size: 7px;
  font-weight: 700;
  line-height: 7px;
  color: #e08a3c;
`;
const Help = styled.b`
  width: 20px;
  height: 20px;
  border-radius: 50%;
  background: #f1f3f6;
  border: 1px solid #33373d;
  color: #2856b0;
  font: 700 16px/18px "Liberation Sans", sans-serif;
  text-align: center;
`;

const TabBar = styled.nav`
  display: flex;
  height: 25px;
  line-height: 25px;
  color: #c6c6c6;
`;
const Tab = styled.div<{ $w: number; $pl: number; $mr?: number; $bg?: string; $c?: string }>`
  flex: none;
  display: flex;
  align-items: center;
  width: ${(p) => p.$w}px;
  padding-left: ${(p) => p.$pl}px;
  margin-right: ${(p) => p.$mr ?? 0}px;
  background: ${(p) => p.$bg ?? "transparent"};
  color: ${(p) => p.$c ?? "#c6c6c6"};
`;
const Collapse = styled.div`
  display: flex;
  align-items: center;
  justify-content: center;
  width: 17px;
  height: 10px;
  margin: 0 7px 0 24px;
  border-radius: 2px;
  background: #dfe2e8;
  i { transform: rotate(180deg); }
`;

const Ribbon = styled.section`
  display: flex;
  height: 119px;
  background: #f5f5f5;
`;
const Group = styled.div<{ $w: number }>`
  flex: none;
  display: flex;
  flex-direction: column;
  width: ${(p) => p.$w}px;
  border-right: 1px solid #dadada;
`;
const GroupBody = styled.div`
  display: flex;
  height: 96px;
`;
const GroupTitle = styled.div<{ $pl: number }>`
  display: flex;
  align-items: center;
  gap: 8px;
  height: 23px;
  line-height: 23px;
  padding: 2px 0 0 ${(p) => p.$pl}px;
`;
const BigCmd = styled.div<{ $w: number }>`
  flex: none;
  display: flex;
  flex-direction: column;
  align-items: center;
  width: ${(p) => p.$w}px;
  padding-top: 5px;
  line-height: 20px;
  svg { margin-bottom: 6px; }
  > i { margin-top: 5px; }
`;
const LabelLine = styled.div`
  display: flex;
  gap: 4px;
  padding-left: 8px;
  i { margin-top: 1px; }
`;
const Col = styled.div<{ $w: number; $pl: number }>`
  flex: none;
  display: flex;
  flex-direction: column;
  width: ${(p) => p.$w}px;
  padding: 3px 0 0 ${(p) => p.$pl}px;
`;
const Cmd = styled.div<{ $gap?: number; $pl?: number }>`
  display: flex;
  align-items: center;
  gap: ${(p) => p.$gap ?? 7}px;
  height: 31px;
  padding-left: ${(p) => p.$pl ?? 0}px;
  line-height: 30px;
  i { margin-left: 4px; }
`;
const FramedRow = styled.div`
  display: flex;
  align-items: center;
  gap: 2px;
  height: 31px;
`;
const Framed = styled.div<{ $w?: number; $flush?: boolean }>`
  flex: none;
  display: flex;
  align-items: center;
  justify-content: center;
  gap: 7px;
  width: ${(p) => p.$w ?? 29}px;
  height: 27px;
  margin-left: ${(p) => (p.$flush ? -3 : 0)}px;
  border: 1px solid #cdcdcd;
  background: #f8f8f8;
`;

const Main = styled.main`
  display: flex;
  height: 825px;
`;
const Side = styled.aside`
  display: flex;
  flex-direction: column;
  width: 304px;
  background: #fff;
`;
const SideHead = styled.div`
  display: flex;
  height: 24px;
  align-items: center;
  background: #5f5f5f;
`;
const ModelTab = styled.div`
  display: flex;
  align-items: center;
  width: 80px;
  height: 24px;
  padding-left: 8px;
  gap: 15px;
  background: #fff;
  color: #6b5c60;
  font-family: ${TREE};
  font-size: 13px;
  svg { margin-top: 3px; }
`;
const Tree = styled.div`
  flex: 1;
  overflow: hidden;
  padding-top: 1px;
  font-family: ${TREE};
  font-size: 12.5px;
  line-height: 25px;
  color: #000;
`;
const Root = styled.div`
  display: flex;
  align-items: center;
  gap: 4px;
  height: 25px;
  padding-left: 3px;
`;
const TreeRow = styled.div<{ $last?: boolean }>`
  display: flex;
  align-items: center;
  height: 25px;
  padding-left: 10px;
  background:
    linear-gradient(#fff, #fff) 0 ${(p) => (p.$last ? 14 : 25)}px / 20px 12px no-repeat,
    repeating-linear-gradient(#777 0 1px, transparent 1px 2px) 10px 0 / 1px 25px no-repeat,
    repeating-linear-gradient(90deg, #777 0 1px, transparent 1px 2px) 11px 13px / 10px 1px no-repeat;
  > svg { margin-right: 4px; }
`;
const Twist = styled.div<{ $on?: boolean }>`
  width: 13px;
  height: 17px;
  margin: 0 4px 0 -4px;
  padding-top: 3px;
  ${(p) => p.$on && css`background: #fff;`}
`;
const HScroll = styled.div`
  display: flex;
  align-items: center;
  height: 21px;
  width: 303px;
  margin-bottom: 1px;
  background: #f0f0f0;
`;
const Thumb = styled.div`
  flex: none;
  width: 255px;
  height: 21px;
  background: #cacaca;
`;
const ScrollEnd = styled.div<{ $w: number }>`
  display: flex;
  flex: none;
  justify-content: center;
  width: ${(p) => p.$w}px;
`;
const Splitter = styled.div`
  width: 4px;
  background: #535353;
`;
const Work = styled.div`
  display: flex;
  flex-direction: column;
  width: 1612px;
`;

/* ---------- 3D viewport ---------- */

const Viewport = styled.div`
  position: relative;
  height: 795px;
  overflow: hidden;
  background: linear-gradient(#7e8ca9 0%, #8a98b3 12%, #959fb6 28%, #9ca3b8 48%, #98a0b2 62%, #9aa0ae 72%, #a9acb5 80%, #b9bbc1 90%, #c5c6ca 100%);
  &::before {
    content: "";
    position: absolute;
    inset: 0;
    background: linear-gradient(90deg,
      rgba(36, 40, 50, .8) 0%, rgba(39, 44, 55, .65) 5%, rgba(42, 48, 62, .45) 11%, rgba(46, 53, 70, .23) 18%, rgba(50, 58, 76, .08) 27%, transparent 37%,
      transparent 63%, rgba(50, 58, 76, .08) 73%, rgba(46, 53, 70, .23) 82%, rgba(42, 48, 62, .45) 89%, rgba(39, 44, 55, .65) 95%, rgba(36, 40, 50, .8) 100%);
    mask-image: linear-gradient(#000 0%, rgba(0, 0, 0, .94) 35%, rgba(0, 0, 0, .76) 55%, rgba(0, 0, 0, .46) 67%, rgba(0, 0, 0, .2) 76%, rgba(0, 0, 0, .06) 88%, transparent 100%);
  }
`;
const Placed = styled.div<{ $x: number; $y: number }>`
  position: absolute;
  left: ${(p) => p.$x}px;
  top: ${(p) => p.$y}px;
`;
const Cube = styled.div`
  display: flex;
  padding: 9px;
  width: 54px;
  height: 54px;
  background: #9296a0;
  border: 1px solid #666b75;
`;
const CubeFace = styled.div`
  flex: 1;
  background: #858c98;
  color: #5d636f;
  font-size: 13.5px;
  font-weight: 700;
  letter-spacing: -1px;
  line-height: 34px;
  text-align: center;
`;
const NavBar = styled.div`
  display: flex;
  width: 33px;
  height: 198px;
  border: 1px solid #3b4250;
  border-radius: 4px;
  background: #7b808a;
  box-shadow: inset 0 0 0 1px #8d919a;
`;

function Model() {
  return (
    <svg width="560" height="560" viewBox="840 295 560 560">
      <defs>
        <linearGradient id="lip" x1="0" y1="0" x2="0" y2="1"><stop offset="0" stopColor="#00a3dc" /><stop offset=".4" stopColor="#00a0d8" /><stop offset="1" stopColor="#0091c3" /></linearGradient>
        <linearGradient id="pv" x1="0" y1="0" x2="0" y2="1"><stop offset="0" stopColor="#67634f" /><stop offset=".2" stopColor="#777160" /><stop offset=".5" stopColor="#827d66" /><stop offset=".75" stopColor="#827d67" /><stop offset="1" stopColor="#716c58" /></linearGradient>
        <linearGradient id="ph"><stop offset="0" stopColor="#5c5745" stopOpacity=".3" /><stop offset=".3" stopColor="#5c5745" stopOpacity="0" /><stop offset=".7" stopColor="#5c5745" stopOpacity="0" /><stop offset="1" stopColor="#5c5745" stopOpacity=".45" /></linearGradient>
        <clipPath id="pc"><rect x="1001.500" y="417.500" width="251" height="312" rx="30" /></clipPath>
        <filter id="soft"><feGaussianBlur stdDeviation="8" /></filter>
      </defs>
      <rect x="881.500" y="304.500" width="499" height="538" fill="#0091c5" />
      <rect x="882" y="305" width="498" height="18" fill="url(#lip)" />
      <rect x="882" y="824" width="498" height="18" fill="#008bbb" />
      <path d="M881.500 304.500h499v538h-499zM881.500 323.500h499M881.500 823.500h499" fill="none" stroke="#175e70" />
      <g clipPath="url(#pc)">
        <rect x="1001" y="417" width="252" height="313" fill="url(#pv)" />
        <rect x="1001" y="417" width="252" height="313" fill="url(#ph)" />
        <g filter="url(#soft)">
          <path d="M1000 506L1105 568 1000 562z" fill="#6a6552" opacity=".6" />
          <path d="M1255 500L1165 566 1255 562z" fill="#6a6552" opacity=".4" />
          <path d="M1000 566L1115 572 1000 612z" fill="#87866e" opacity=".8" />
          <path d="M1255 570L1115 576 1255 600z" fill="#87856c" opacity=".7" />
          <path d="M1000 612L1100 590 1000 680z" fill="#69644f" opacity=".45" />
          <path d="M1255 606L1160 592 1255 690z" fill="#69644f" opacity=".4" />
          <path d="M1010 480L1105 565 1120 560 1050 485z" fill="#8a866e" opacity=".45" />
        </g>
      </g>
      <rect x="1001.500" y="417.500" width="251" height="312" rx="30" fill="none" stroke="#1c4f58" />
      <path d="M1381 324v500" stroke="#ffff10" strokeWidth="2" />
      <path d="M903 843.500h380" stroke="#5cf000" strokeWidth="1.300" />
      <path d="M868 842.500h415" stroke="#101820" />
      <g fill="#ffff20"><rect x="880" y="685" width="1.500" height="4" /><rect x="1381" y="685" width="2.500" height="4" /><rect x="880" y="843" width="4" height="2" /></g>
      <g fill="#2a0090"><rect x="1379" y="571" width="4" height="4" /><rect x="1379" y="841" width="4" height="4" /></g>
      <g fontFamily="DejaVu Sans, sans-serif" fontSize="11.500" fill="#16202a">
        <text x="844.500" y="847" textLength="24">.884</text>
        <text x="1013" y="847" textLength="31">2.404</text>
      </g>
    </svg>
  );
}

function Triad() {
  return (
    <svg width="60" height="60" viewBox="350 905 60 60">
      <path d="M360.500 918h24" stroke="#b00000" strokeWidth="1.500" />
      <path d="M380 912l11 6-11 6z" fill="#b40000" />
      <path d="M360.500 918v24" stroke="#2020b0" strokeWidth="1.300" />
      <path d="M354 938.500h13l-6.500 10.500z" fill="#0000a8" />
      <circle cx="360.500" cy="918" r="6" fill="#00b400" />
      <path d="M358 915l2.500 3 2.500-3M360.500 918v3.500" stroke="#064d06" fill="none" />
      <g fontFamily="DejaVu Sans, sans-serif" fontSize="11.500">
        <text x="392.500" y="922" fill="#f02828">X</text>
        <text x="356.500" y="959" fill="#2828f0">Z</text>
      </g>
    </svg>
  );
}

function NavTools() {
  return (
    <svg width="31" height="196" viewBox="1888 322 31 196">
      <g fill="#5c616b"><circle cx="1912" cy="328" r="4" /><circle cx="1912" cy="511" r="4" /></g>
      <path d="M1910 326l4 4m0-4l-4 4M1909.500 510h5M1910 512.500h4" stroke="#c6c9ce" strokeWidth="1.200" />
      <path d="M1903 344h10v10a10 10 0 1 1-10-10z" fill="#a9adb5" stroke="#d3d6da" strokeWidth="1.200" />
      <circle cx="1903" cy="354" r="5.500" fill="#b4b8bf" stroke="#6d727c" />
      <path d="M1897 361l3-3m10 3l-3-3" stroke="#6d727c" />
      <path d="M1899.500 375h6l-3 3.500zM1899.500 437h6l-3 3.500zM1899.500 471h6l-3 3.500z" fill="#5b606a" />
      <path d="M1890 382.500h26" stroke="#5f646e" />
      <path d="M1896 396l4 3-1-9 1.500-.5 1.500 7 .5-8h1.500l.8 8 1.700-7 1.500.5-.5 8 2-4 1.500.5-2 8c-1 4-8 5-10 1z" fill="#c6c9ce" stroke="#6a6f79" strokeWidth=".5" />
      <path d="M1905 423l5 5" stroke="#5f646e" strokeWidth="3" />
      <circle cx="1901.500" cy="419" r="6" fill="#8d929b" stroke="#bfc2c8" strokeWidth="1.300" />
      <path d="M1898.500 415h4l2 2v6h-6z" fill="#d0d3d7" />
      <g fill="none" stroke="#5b606a" strokeWidth="1.200"><ellipse cx="1902.500" cy="455" rx="3.500" ry="7.500" /><ellipse cx="1903" cy="455" rx="8" ry="3" /></g>
      <path d="M1902.500 452v6M1899.500 455h6" stroke="#9ea2aa" />
      <path d="M1895.500 486.500h14v10h-14z" fill="#a4a8b0" stroke="#c9ccd1" />
      <rect x="1898.500" y="489" width="8" height="4.500" fill="#7c818b" stroke="#565b65" />
      <path d="M1896 485l9-3v3z" fill="#b4b7bd" />
    </svg>
  );
}

const DocTabs = styled.div`
  display: flex;
  height: 30px;
  align-items: center;
  background: #5f5f5f;
  color: #c4c4c4;
  line-height: 29px;
`;
const DocTab = styled.div<{ $w: number; $on?: boolean }>`
  display: flex;
  flex: none;
  align-items: center;
  gap: 9px;
  width: ${(p) => p.$w}px;
  height: 30px;
  padding-left: 9px;
  border-left: 1px solid #a0a0a0;
  ${(p) => p.$on && css`background: #f5f5f5; color: #4f4f4f; border-left-color: #f5f5f5;`}
`;
const Status = styled.footer`
  display: flex;
  height: 29px;
  background: #f5f5f5;
  color: #111;
  line-height: 33px;
`;
const StatusCell = styled.div<{ $w: number; $pl: number }>`
  width: ${(p) => p.$w}px;
  height: 27px;
  margin-top: 2px;
  padding-left: ${(p) => p.$pl}px;
  border-left: 1px solid #d0d0d0;
  line-height: 29px;
`;

const Taskbar = styled.div`
  display: flex;
  height: 50px;
  background: linear-gradient(#573412 0 1px, #3a1f02 1px 9px, #3a2410 9px 49px, #2d1606 49px);
  color: #fff;
  line-height: 49px;
`;
const Task = styled.div<{ $w: number; $pl: number; $mr?: number; $line?: boolean; $on?: boolean }>`
  flex: none;
  display: flex;
  align-items: center;
  width: ${(p) => p.$w}px;
  height: 50px;
  padding-left: ${(p) => p.$pl}px;
  margin-right: ${(p) => p.$mr ?? 0}px;
  ${(p) => p.$on && css`background: #9f5a05;`}
  ${(p) => p.$line && css`box-shadow: inset 0 -3px #ffc990;`}
`;
const InvTile = styled.div`
  display: flex;
  flex-direction: column;
  align-items: center;
  width: 30px;
  height: 30px;
  margin-right: 4px;
  padding-top: 3px;
  background: #fbe6d6;
  border: 1px solid #fff;
  font-size: 6px;
  line-height: 6px;
  font-weight: 700;
  color: #e07a28;
`;
const Clock = styled.div`
  display: flex;
  flex-direction: column;
  align-items: center;
  width: 76px;
  padding-top: 1px;
  line-height: 23.5px;
`;
const ShowDesktop = styled.div`
  width: 6px;
  margin-left: 4px;
  border-left: 1px solid #8c7a68;
`;

const IBeam = ({ w, h }: { w: number; h: number }) => (
  <svg width={w} height={h} viewBox="0 0 12 20">
    <path d="M0 0h12v3l-3 2v10l3 2v3H0v-3l3-2V5L0 3z" fill="#e08a3c" /><path d="M5 3h2v14H5z" fill="#a85c1c" />
  </svg>
);

const TREE_ITEMS: [string, string, number, boolean?][] = [
  ["bodies", "Solid Bodies(1)", 86, true],
  ["view", "View: Master", 76, true],
  ["folder", "Origin", 34, true],
  ["sketchGrayOpen", "Sketch1", 44],
  ["sketchPin", "Sketch2", 45],
  ["extrusion", "Extrusion1", 58, true],
  ["sketchPin", "Sketch3", 45],
  ["sketchPin", "Sketch4", 45],
  ["sketchPin", "Hole1(Right)", 71],
  ["sketchPinGray", "Sketch6", 45],
  ["sketch3d", "3D Sketch1", 63],
  ["sketchGray", "Sketch7", 45],
  ["sketchPinGray", "Sketch8", 45],
  ["sketchPinGray", "Sketch9", 45],
  ["sketchPinGray", "Sketch10", 52],
  ["sketchPinGray", "Sketch11", 52],
  ["sketchPinGray", "Sketch12", 52],
  ["extrusion", "Extrusion2", 59, true],
  ["sketch", "Hole2(front)", 69],
  ["extrusion", "Extrusion3", 59, true],
  ["end", "End of Part", 63],
];

const TABS: [string, number, number][] = [
  ["Sketch", 43, 68], ["Annotate", 60, 86], ["Inspect", 47, 72], ["Tools", 35, 60], ["Manage", 54, 78], ["View", 32, 56],
  ["Environments", 89, 114], ["Get Started", 74, 100], ["Vault", 33, 58], ["Autodesk A360", 100, 116],
];

const TRAY: [string, number, number][] = [
  ["tgrid", 20, 41], ["tadsk", 20, 39], ["tw", 20, 40], ["tshield", 20, 40], ["tnv", 20, 41], ["tbatt", 20, 41], ["twifi", 20, 38], ["tmute", 19, 36],
];

function Row({ n, t, w, gap, arrow, pl }: { n: string; t: string; w: number; gap?: number; arrow?: boolean; pl?: number }) {
  return (
    <Cmd $gap={gap} $pl={pl}>
      <Icon n={n} />
      <Fit w={w}>{t}</Fit>
      {arrow && <Arrow />}
    </Cmd>
  );
}

export default function App() {
  return (
    <Screen>
      <Global />
      <TitleBar>
        <Push $w={6} />
        <Slot $w={33}><ProLogo><IBeam w={11} h={18} /><span>PRO</span></ProLogo></Slot>
        <Slot $w={30}><Icon n="newdoc" /></Slot>
        <Slot $w={15}><Arrow $c="#ccc" /></Slot>
        <Slot $w={30}><Icon n="open" /></Slot>
        <Slot $w={31}><Icon n="save" /></Slot>
        <Slot $w={28}><Icon n="undo" s={18} /></Slot>
        <Slot $w={17}><Arrow $c="#ccc" /></Slot>
        <Slot $w={28}><Icon n="redo" s={18} /></Slot>
        <Slot $w={16}><Arrow $c="#aaa" /></Slot>
        <Slot $w={9}><Vline /></Slot>
        <Slot $w={30}><Icon n="home" /></Slot>
        <Slot $w={30}><Icon n="sketchdim" /></Slot>
        <Slot $w={16}><Arrow $c="#ccc" /></Slot>
        <Slot $w={26}><Icon n="select" /></Slot>
        <Slot $w={17}><Arrow $c="#ccc" /></Slot>
        <Slot $w={30}><Icon n="links" /></Slot>
        <Slot $w={26}><Icon n="mesh" /></Slot>
        <Combo $w={125} $mr={4}><Push $w={9} /><Fit w={50}>Generic</Fit><Push $w={53} /><Arrow $s={5} $c="#444" /></Combo>
        <Slot $w={26}><Icon n="wheel" /></Slot>
        <Combo $w={125} $mr={4}><Push $w={4} /><Icon n="swatch" /><Push $w={3} /><Clip $w={72}><Fit w={78}>*Cadet Blue</Fit></Clip><Push $w={13} /><Arrow $s={5} $c="#444" /></Combo>
        <Slot $w={30}><Icon n="wheelfilter" /></Slot>
        <Slot $w={31}><Icon n="wheelx" /></Slot>
        <Slot $w={30}><Fx>f<sub>x</sub></Fx></Slot>
        <Slot $w={29}><Icon n="plus" s={18} /></Slot>
        <Slot $w={68}><svg width="10" height="10" viewBox="0 0 10 10"><path d="M0 1h10" stroke="#ddd" strokeWidth="2" /><path d="M0 4h10L5 9z" fill="#ddd" /></svg></Slot>
        <Slot $w={382} $pt={3}><Fit w={325}>PassengerSectionAutomobloxT92016_SeanPM.ipt</Fit></Slot>
        <Slot $w={12}><svg width="5" height="10" viewBox="0 0 5 10"><path d="M0 0l5 5-5 5z" fill="#ddd" /></svg></Slot>
        <SearchBox $w={225} $mr={5}><Push $w={6} /><Fit w={184}>Search Help &amp; Commands...</Fit></SearchBox>
        <Slot $w={29}><Icon n="satellite" s={19} /></Slot>
        <Slot $w={30}><Icon n="star" s={18} /></Slot>
        <Slot $w={27}><Icon n="person" /></Slot>
        <Slot $w={106}><Fit w={45}>Sign In</Fit></Slot>
        <Slot $w={19}><Arrow $c="#ccc" /></Slot>
        <Slot $w={32}><Icon n="cart" /></Slot>
        <Slot $w={12}><Vline /></Slot>
        <Slot $w={30}><Help>?</Help></Slot>
        <Slot $w={41}><Arrow $c="#ccc" /></Slot>
        <Slot $w={80}>
          <svg width="75" height="16" viewBox="0 0 75 16"><path d="M0 13.500h10" stroke="#e4e4e4" strokeWidth="3" /><path d="M34 5V2h9v7h-4M29 6.500h9v7h-9z" fill="none" stroke="#e4e4e4" strokeWidth="1.700" /><path d="M61 2l12 12m0-12L61 14" stroke="#e4e4e4" strokeWidth="2" /></svg>
        </Slot>
      </TitleBar>

      <TabBar>
        <Tab $w={54} $pl={15} $mr={3} $bg="#f08528" $c="#fff"><Fit w={23}>File</Fit></Tab>
        <Tab $w={88} $pl={11} $mr={13} $bg="#f5f5f5" $c="#555"><Fit w={65}>3D Model</Fit></Tab>
        {TABS.map(([t, w, cell]) => <Tab key={t} $w={cell} $pl={0}><Fit w={w}>{t}</Fit></Tab>)}
        <Tab $w={60} $pl={0}><Collapse><Arrow /></Collapse><Arrow $c="#eee" /></Tab>
      </TabBar>

      <Ribbon>
        <Group $w={99}>
          <GroupBody>
            <BigCmd $w={97}><Icon n="start2d" s={40} /><Fit w={31}>Start</Fit><LabelLine><Fit w={66}>2D Sketch</Fit><Arrow /></LabelLine></BigCmd>
          </GroupBody>
          <GroupTitle $pl={27}><Fit w={43}>Sketch</Fit></GroupTitle>
        </Group>
        <Group $w={380}>
          <GroupBody>
            <BigCmd $w={61}><Icon n="extrude" s={40} /><Fit w={50}>Extrude</Fit></BigCmd>
            <BigCmd $w={59}><Icon n="revolve" s={40} /><Fit w={52}>Revolve</Fit></BigCmd>
            <Col $w={82} $pl={4}><Row n="sweep" t="Sweep" w={44} /><Row n="loft" t="Loft" w={26} /><Row n="coil" t="Coil" w={26} /></Col>
            <Col $w={91} $pl={5}><Row n="emboss" t="Emboss" w={51} /><Row n="derive" t="Derive" w={43} /><Row n="rib" t="Rib" w={22} gap={8} /></Col>
            <Col $w={80} $pl={5}><Row n="decal" t="Decal" w={37} gap={8} /><Row n="import" t="Import" w={45} gap={6} /></Col>
          </GroupBody>
          <GroupTitle $pl={168}><Fit w={43}>Create</Fit></GroupTitle>
        </Group>
        <Group $w={452}>
          <GroupBody>
            <BigCmd $w={52}><Icon n="hole" s={40} /><Fit w={32}>Hole</Fit></BigCmd>
            <BigCmd $w={44}><Icon n="fillet" s={40} /><Fit w={32}>Fillet</Fit></BigCmd>
            <Col $w={95} $pl={7}><Row n="chamfer" t="Chamfer" w={56} /><Row n="shell" t="Shell" w={32} /><Row n="draft" t="Draft" w={34} /></Col>
            <Col $w={140} $pl={7}><Row n="thread" t="Thread" w={46} /><Row n="combine" t="Combine" w={60} /><Row n="thicken" t="Thicken/ Offset" w={100} /></Col>
            <Col $w={120} $pl={7}><Row n="split" t="Split" w={31} /><Row n="direct" t="Direct" w={40} /><Row n="delface" t="Delete Face" w={77} gap={6} /></Col>
          </GroupBody>
          <GroupTitle $pl={193}><Fit w={47}>Modify</Fit><Arrow $s={5} /></GroupTitle>
        </Group>
        <Group $w={80}>
          <GroupBody><BigCmd $w={79}><Icon n="shape" s={40} /><Fit w={41}>Shape</Fit><Fit w={66}>Generator</Fit></BigCmd></GroupBody>
          <GroupTitle $pl={14}><Fit w={50}>Explore</Fit></GroupTitle>
        </Group>
        <Group $w={156}>
          <GroupBody>
            <BigCmd $w={68}><Icon n="plane" s={40} /><Fit w={36}>Plane</Fit><Arrow /></BigCmd>
            <Col $w={86} $pl={3}><Row n="axis" t="Axis" w={28} gap={6} arrow /><Row n="point" t="Point" w={34} gap={6} arrow /><Row n="ucs" t="UCS" w={28} gap={6} /></Col>
          </GroupBody>
          <GroupTitle $pl={31}><Fit w={93}>Work Features</Fit></GroupTitle>
        </Group>
        <Group $w={68}>
          <GroupBody>
            <Col $w={66} $pl={3}>
              <FramedRow><Framed><Icon n="patrect" /></Framed><Framed><Icon n="mirror" /></Framed></FramedRow>
              <FramedRow><Framed><Icon n="patcirc" /></Framed></FramedRow>
              <FramedRow><Framed><Icon n="patsketch" /></Framed></FramedRow>
            </Col>
          </GroupBody>
          <GroupTitle $pl={10}><Fit w={46}>Pattern</Fit></GroupTitle>
        </Group>
        <Group $w={147}>
          <GroupBody>
            <BigCmd $w={56}><Icon n="box" s={40} /><Fit w={24}>Box</Fit><Arrow /></BigCmd>
            <Col $w={86} $pl={3}><Row n="face" t="Face" w={29} gap={6} /><Row n="convert" t="Convert" w={51} gap={6} /></Col>
          </GroupBody>
          <GroupTitle $pl={20}><Fit w={106}>Create Freeform</Fit></GroupTitle>
        </Group>
        <Group $w={184}>
          <GroupBody>
            <Col $w={78} $pl={7}><Row n="stitch" t="Stitch" w={37} gap={6} /><Row n="patch" t="Patch" w={35} gap={6} /><Row n="sculpt" t="Sculpt" w={41} gap={6} /></Col>
            <Col $w={68} $pl={4}>
              <FramedRow><Framed><Icon n="ruled" /></Framed></FramedRow>
              <Row n="trim" t="Trim" w={28} gap={6} pl={4} />
              <FramedRow><Framed><Icon n="thickenS" /></Framed></FramedRow>
            </Col>
            <Col $w={36} $pl={4}>
              <FramedRow><Framed><Icon n="replace" /></Framed></FramedRow>
              <FramedRow><Framed><Icon n="repair" /></Framed></FramedRow>
              <FramedRow><Framed><Icon n="extend" /></Framed></FramedRow>
            </Col>
          </GroupBody>
          <GroupTitle $pl={67}><Fit w={49}>Surface</Fit></GroupTitle>
        </Group>
        <Group $w={116}>
          <GroupBody>
            <Col $w={100} $pl={35}>
              <FramedRow><Framed><Icon n="ipart" /></Framed></FramedRow>
              <FramedRow><Framed><Icon n="itable" /></Framed></FramedRow>
              <FramedRow><Framed><Icon n="iedit" /></Framed><Framed $w={16} $flush><Arrow /></Framed></FramedRow>
            </Col>
          </GroupBody>
          <GroupTitle $pl={6}><Fit w={101}>iPart/iAssembly</Fit></GroupTitle>
        </Group>
        <Group $w={84}>
          <GroupBody><BigCmd $w={83}><Icon n="stress" s={40} /><Fit w={38}>Stress</Fit><Fit w={53}>Analysis</Fit></BigCmd></GroupBody>
          <GroupTitle $pl={6}><Fit w={71}>Simulation</Fit></GroupTitle>
        </Group>
        <Group $w={92}>
          <GroupBody><BigCmd $w={89}><Icon n="sheet" s={40} /><Fit w={69}>Convert to</Fit><Fit w={78}>Sheet Metal</Fit></BigCmd></GroupBody>
          <GroupTitle $pl={20}><Fit w={51}>Convert</Fit></GroupTitle>
        </Group>
        <Col $w={60} $pl={3}><FramedRow><Framed $w={43}><Icon n="down" /><Arrow /></Framed></FramedRow></Col>
      </Ribbon>

      <Main>
        <Side>
          <SideHead>
            <ModelTab><Fit w={34}>Model</Fit><svg width="10" height="10" viewBox="0 0 10 10"><path d="M1 1l8 8m0-8L1 9" stroke="#555" strokeWidth="1.300" /></svg></ModelTab>
            <Push $w={6} /><svg width="9" height="9" viewBox="0 0 9 9"><path d="M4.500 0v9M0 4.500h9" stroke="#fff" strokeWidth="2" /></svg>
            <Push $w={170} /><svg width="14" height="14" viewBox="0 0 14 14"><circle cx="6" cy="6" r="4.800" fill="none" stroke="#ddd" strokeWidth="1.200" /><path d="M9.500 9.500L13 13" stroke="#ddd" strokeWidth="1.300" /></svg>
            <Push $w={10} /><svg width="13" height="11" viewBox="0 0 13 11"><path d="M0 1h13M0 5.500h13M0 10h13" stroke="#ddd" strokeWidth="1.300" /></svg>
          </SideHead>
          <Tree>
            <Root><Icon n="part" /><Clip $w={276}><Fit w={284}>PassengerSectionAutomobloxT92016_SeanPM.ipt</Fit></Clip></Root>
            {TREE_ITEMS.map(([n, t, w, open], i) => (
              <TreeRow key={t} $last={i === TREE_ITEMS.length - 1}>
                <Twist $on={open}>{open && <svg width="10" height="12" viewBox="0 0 10 12"><path d="M2 1l5 5-5 5" fill="none" stroke="#9a9a9a" strokeWidth="2.400" /></svg>}</Twist>
                <Icon n={n} />
                <Fit w={w}>{t}</Fit>
              </TreeRow>
            ))}
          </Tree>
          <HScroll>
            <ScrollEnd $w={21}><svg width="6" height="10" viewBox="0 0 6 10"><path d="M5 0L1 5l4 5" fill="none" stroke="#999" strokeWidth="1.500" /></svg></ScrollEnd>
            <Thumb />
            <ScrollEnd $w={27}><Push $w={5} /><svg width="6" height="10" viewBox="0 0 6 10"><path d="M1 0l4 5-4 5" fill="none" stroke="#999" strokeWidth="1.500" /></svg></ScrollEnd>
          </HScroll>
        </Side>
        <Splitter />
        <Work>
          <Viewport>
            <Placed $x={532} $y={119}><Model /></Placed>
            <Placed $x={42} $y={729}><Triad /></Placed>
            <Placed $x={1559} $y={5}>
              <svg width="53" height="14" viewBox="0 0 53 14"><path d="M1 8.500h11" stroke="#fff" strokeWidth="2.500" /><path d="M21.500 4.500h6v7h-6zM23.500 4V1.500H30V9h-2" fill="none" stroke="#fff" strokeWidth="1.700" /><path d="M42 2l8 9m0-9l-8 9" stroke="#fff" strokeWidth="2.600" /></svg>
            </Placed>
            <Placed $x={1524} $y={59}><Cube><CubeFace>TOP</CubeFace></Cube></Placed>
            <Placed $x={1578} $y={145}><NavBar><NavTools /></NavBar></Placed>
          </Viewport>
          <DocTabs>
            <Push $w={5} /><Icon n="cascade" /><Push $w={10} /><Icon n="tiles" /><Push $w={10} /><Icon n="rows" /><Push $w={9} /><Icon n="cols" />
            <Push $w={14} /><svg width="13" height="10" viewBox="0 0 13 10"><path d="M0 10L6.500 0 13 10z" fill="#ddd" /></svg><Push $w={9} />
            <DocTab $w={90}><Fit w={65}>My Home</Fit></DocTab>
            <DocTab $w={181} $on><Fit w={135}>PassengerSectio...ipt</Fit><svg width="12" height="12" viewBox="0 0 12 12"><path d="M1.500 1.500l9 9m0-9l-9 9" stroke="#444" strokeWidth="2.800" /></svg></DocTab>
          </DocTabs>
        </Work>
      </Main>

      <Status>
        <Fit w={41}>Ready</Fit><Push $w={1801} />
        <StatusCell $w={40} $pl={10}>1</StatusCell>
        <StatusCell $w={38} $pl={8}>1</StatusCell>
      </Status>

      <Taskbar>
        <Task $w={78} $pl={20}><Icon n="windows" /></Task>
        <Task $w={51} $pl={0}><svg width="24" height="20" viewBox="0 0 24 20"><path d="M4.500 1.500h15v17h-15zM3 3.500H.8v13H3M21 3.500h2.200v13H21" fill="none" stroke="#fff" strokeWidth="1.300" /></svg></Task>
        <Task $w={190} $pl={8} $mr={11} $line><Icon n="firefox" s={29} /><Push $w={5} /><Fit w={137}>Activity 5.2b: Introd...</Fit></Task>
        <Task $w={190} $pl={9} $mr={22} $line><Icon n="explorer" s={26} /><Push $w={7} /><Fit w={101}>AutomotaBody</Fit></Task>
        <Task $w={46} $pl={0}><Icon n="excel" s={27} /></Task>
        <Task $w={200} $pl={13} $mr={6} $line $on><InvTile><IBeam w={12} h={18} /><span>PRO</span></InvTile><Fit w={133}>Autodesk Inventor ...</Fit></Task>
        <Task $w={190} $pl={9} $mr={21} $line><Icon n="taskmgr" s={27} /><Push $w={6} /><Fit w={90}>Task Manager</Fit></Task>
        <Task $w={515} $pl={0}><Icon n="paint" s={29} /></Task>
        {TRAY.map(([n, s, w]) => <Task key={n} $w={w} $pl={0}><Icon n={n} s={s} /></Task>)}
        <Clock><Fit w={51}>2:41 PM</Fit><Fit w={67}>1/13/2020</Fit></Clock>
        <ShowDesktop />
      </Taskbar>
    </Screen>
  );
}
